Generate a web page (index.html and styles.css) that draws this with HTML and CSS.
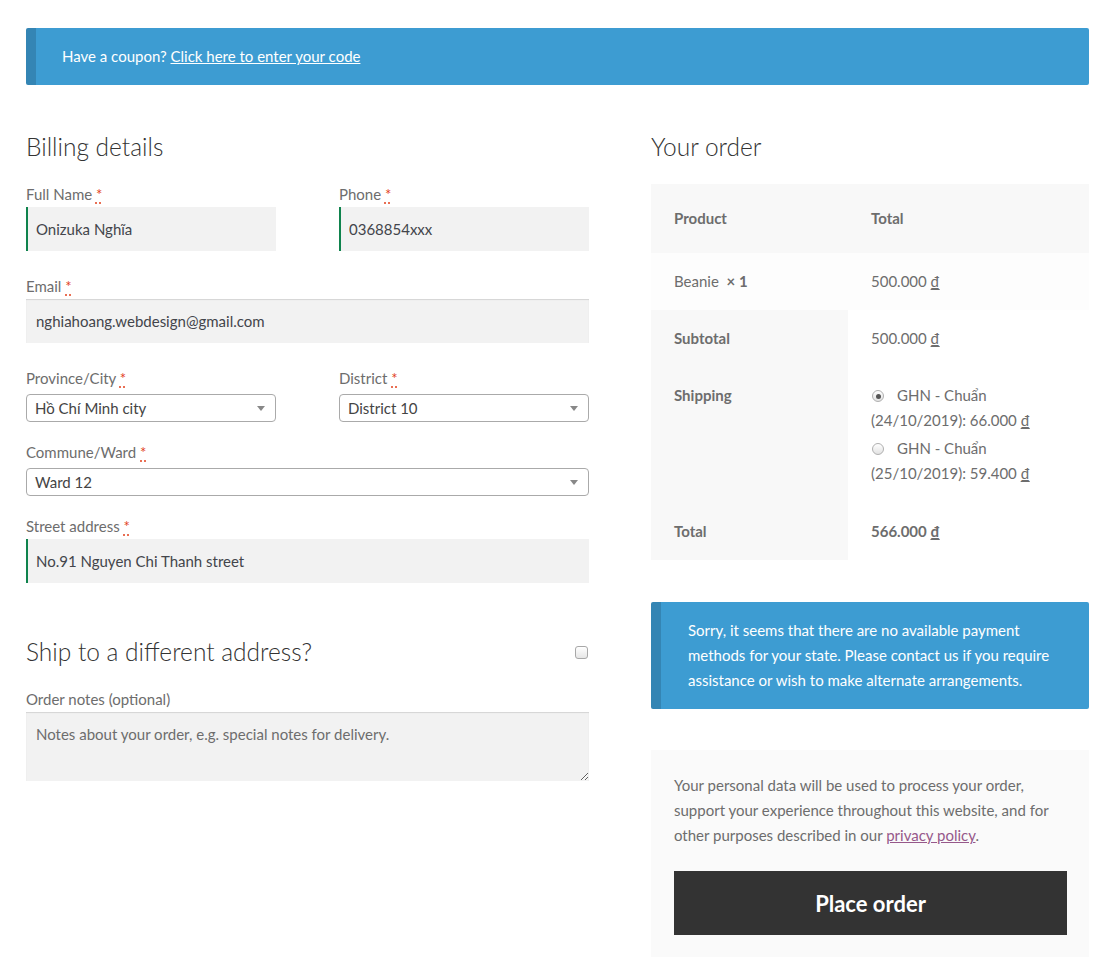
FILE: index.html
```html
<!DOCTYPE html>
<html lang="vi">
<head>
<meta charset="utf-8">
<title>Checkout</title>
<link rel="stylesheet" href="styles.css">
</head>
<body>
<div class="page">
  <div class="notice coupon">Have a coupon? <a href="#">Click here to enter your code</a></div>

  <div class="checkout">
    <div class="col-left">
      <h3 class="heading">Billing details</h3>

      <div class="row-pair">
        <div class="field half">
          <label class="label">Full Name <abbr class="req">*</abbr></label>
          <input class="input valid" type="text" value="Onizuka Nghĩa">
        </div>
        <div class="field half">
          <label class="label">Phone <abbr class="req">*</abbr></label>
          <input class="input valid" type="text" value="0368854xxx">
        </div>
      </div>

      <div class="field">
        <label class="label">Email <abbr class="req">*</abbr></label>
        <input class="input" type="text" value="nghiahoang.webdesign@gmail.com">
      </div>

      <div class="row-pair">
        <div class="field half sel-field">
          <label class="label">Province/City <abbr class="req">*</abbr></label>
          <div class="select"><span class="sel-text">Hồ Chí Minh city</span><span class="arrow"></span></div>
        </div>
        <div class="field half sel-field">
          <label class="label">District <abbr class="req">*</abbr></label>
          <div class="select"><span class="sel-text">District 10</span><span class="arrow"></span></div>
        </div>
      </div>

      <div class="field sel-field">
        <label class="label">Commune/Ward <abbr class="req">*</abbr></label>
        <div class="select"><span class="sel-text">Ward 12</span><span class="arrow"></span></div>
      </div>

      <div class="field">
        <label class="label">Street address <abbr class="req">*</abbr></label>
        <input class="input valid" type="text" value="No.91 Nguyen Chi Thanh street">
      </div>

      <div class="ship-head">
        <h3 class="heading">Ship to a different address?</h3>
        <span class="checkbox"></span>
      </div>

      <div class="field">
        <label class="label">Order notes (optional)</label>
        <textarea class="textarea" placeholder="Notes about your order, e.g. special notes for delivery."></textarea>
      </div>
    </div>

    <div class="col-right">
      <h3 class="heading">Your order</h3>
      <table class="order">
        <thead>
          <tr><th class="c1">Product</th><th>Total</th></tr>
        </thead>
        <tbody>
          <tr><td class="c1">Beanie&nbsp; <strong>× 1</strong></td><td>500.000 <span class="cur">₫</span></td></tr>
        </tbody>
        <tfoot>
          <tr><th class="c1">Subtotal</th><td>500.000 <span class="cur">₫</span></td></tr>
          <tr><th class="c1">Shipping</th><td>
            <ul class="ship-list">
              <li><span class="radio checked"></span>GHN - Chuẩn (24/10/2019): 66.000 <span class="cur">₫</span></li>
              <li><span class="radio"></span>GHN - Chuẩn (25/10/2019): 59.400 <span class="cur">₫</span></li>
            </ul>
          </td></tr>
          <tr><th class="c1">Total</th><td><strong>566.000 <span class="cur">₫</span></strong></td></tr>
        </tfoot>
      </table>

      <div class="notice payment">Sorry, it seems that there are no available payment methods for your state. Please contact us if you require assistance or wish to make alternate arrangements.</div>

      <div class="place">
        <p class="privacy">Your personal data will be used to process your order, support your experience throughout this website, and for other purposes described in our <a href="#">privacy policy</a>.</p>
        <button class="btn" type="button">Place order</button>
      </div>
    </div>
  </div>
</div>
</body>
</html>
```

FILE: styles.css
```css
* { box-sizing: border-box; }
html, body { margin: 0; padding: 0; background: #fff; }
body {
  font-family: Lato, "Liberation Sans", sans-serif;
  font-size: 15px;
  line-height: 25px;
  color: #6d6d6d;
}
.page { padding: 28px 25px 0 26px; width: 1114px; }

.notice {
  background: #3d9cd2;
  color: #fff;
  border-left: 10px solid #3485b4;
  border-radius: 2px;
  padding: 16px 26px;
}
.notice a { color: #fff; text-decoration: underline; }
.coupon { height: 57px; }

.checkout { display: flex; gap: 62px; margin-top: 45px; }
.col-left { width: 563px; flex: none; }
.col-right { width: 438px; flex: none; }

.heading {
  margin: 0;
  font-size: 24.5px;
  line-height: 34px;
  font-weight: 300;
  color: #333;
}

.col-left > .heading { margin-bottom: 18px; }

.row-pair { display: flex; justify-content: space-between; }
.half { width: 250px; }
.field { margin-bottom: 23px; }
.sel-field { margin-bottom: 18px; }
.label { display: block; height: 25px; color: #6d6d6d; }
.req {
  color: #e2401c;
  text-decoration: underline dotted #e2401c;
  text-underline-offset: 3px;
  border: none;
}

.input {
  display: block;
  width: 100%;
  height: 44px;
  border: 0;
  background: #f2f2f2;
  box-shadow: inset 0 1px 1px rgba(0,0,0,0.125);
  padding: 0 10px;
  font: inherit;
  color: #43454b;
  outline: none;
}
.input.valid { border-left: 2px solid #0f834d; padding-left: 8px; box-shadow: none; }

.select {
  margin-top: 3px;
  height: 28px;
  border: 1px solid #aaa;
  border-radius: 4px;
  background: #fff;
  display: flex;
  align-items: center;
  padding: 0 8px;
  color: #444;
}
.sel-text { flex: 1; line-height: 26px; }
.arrow {
  width: 0; height: 0;
  border-style: solid;
  border-width: 5px 4px 0 4px;
  border-color: #888 transparent transparent transparent;
  margin-right: 2px;
}

.ship-head {
  display: flex;
  align-items: center;
  justify-content: space-between;
  margin-top: 52px;
  margin-bottom: 18px;
}
.checkbox {
  width: 13px; height: 13px;
  border: 1px solid #a8a8a8;
  border-radius: 3px;
  background: linear-gradient(#fff, #e6e6e6);
  margin-right: 1px;
}

.textarea {
  display: block;
  width: 100%;
  height: 69px;
  border: 0;
  background: #f2f2f2;
  box-shadow: inset 0 1px 1px rgba(0,0,0,0.125);
  padding: 10px 10px;
  font: inherit;
  line-height: 25px;
  color: #43454b;
  resize: vertical;
  outline: none;
}
.textarea::placeholder { color: #6d6d6d; opacity: 1; }

.col-right > .heading { margin-bottom: 20px; }

.order { width: 100%; border-collapse: collapse; border-spacing: 0; }
.order th, .order td { text-align: left; vertical-align: top; padding: 16px 23px; font-weight: 400; }
.order th { font-weight: 700; background: #f8f8f8; }
.order .c1 { width: 197px; }
.order thead th { padding: 22px 23px; vertical-align: middle; }
.order tbody td { background: #fdfdfd; }
.order tfoot td { background: #fff; }
.order strong { font-weight: 700; }
.cur { text-decoration: underline; text-underline-offset: 2px; }

.ship-list { list-style: none; margin: 0; padding: 0; }
.ship-list li { margin-bottom: 3px; }
.ship-list li:last-child { margin-bottom: 1px; }
.radio {
  display: inline-block;
  width: 12px; height: 12px;
  border: 1px solid #b0b0b0;
  border-radius: 50%;
  background: linear-gradient(#fff, #e2e2e2);
  margin: 0 13px 0 1px;
  vertical-align: -1px;
  position: relative;
}
.radio.checked::after {
  content: "";
  position: absolute;
  left: 2.5px; top: 2.5px;
  width: 5px; height: 5px;
  border-radius: 50%;
  background: #555;
}

.payment { margin-top: 42px; padding: 16px 27px; }

.place {
  margin-top: 41px;
  background: #fafafa;
  padding: 23px 22px 22px 23px;
}
.privacy { margin: 0; }
.privacy a { color: #96588a; text-decoration: underline; }
.btn {
  display: block;
  width: 100%;
  margin-top: 23px;
  height: 64px;
  border: 0;
  background: #333;
  color: #fff;
  font-family: inherit;
  font-size: 22px;
  font-weight: 700;
  cursor: pointer;
}
```
